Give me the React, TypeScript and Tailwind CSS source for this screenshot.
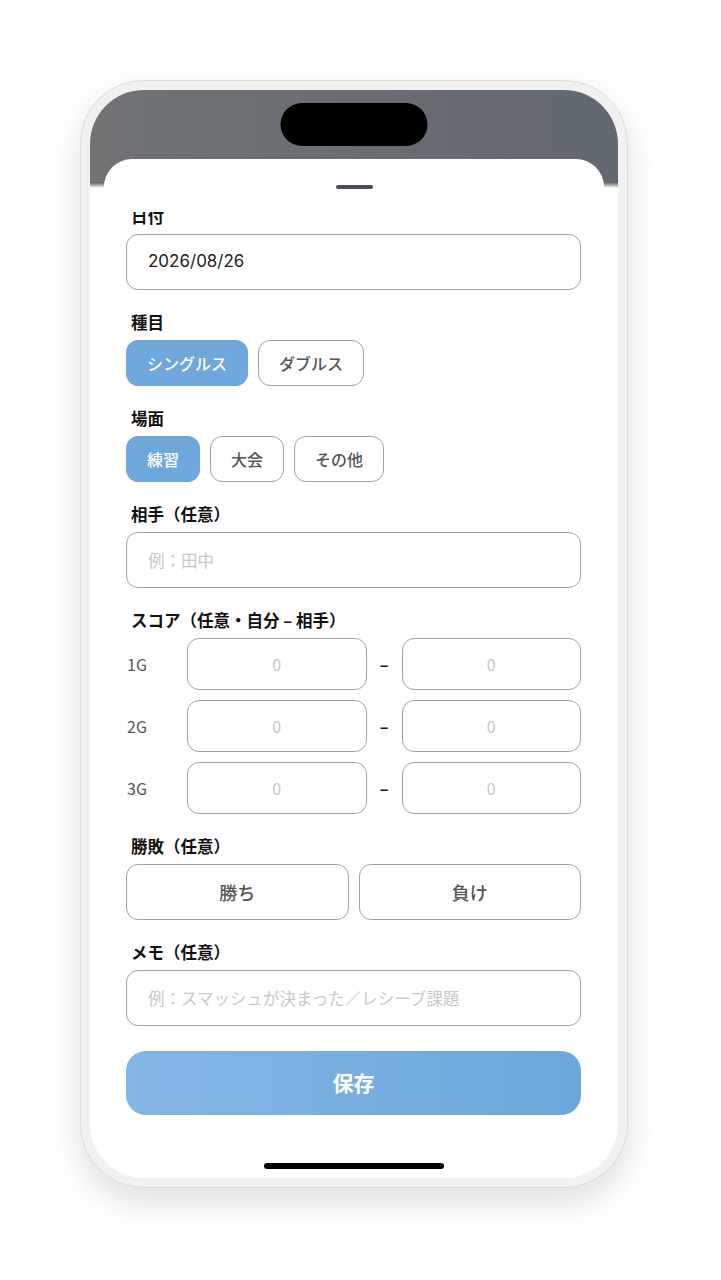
import { useState } from "react";

const jp = "font-['Noto_Sans_CJK_JP','Noto_Sans',sans-serif]";

function Label({ children }: { children: React.ReactNode }) {
  return (
    <div className="mb-2 pl-[5px] text-[16.5px] leading-[20px] font-bold text-[#111]">
      {children}
    </div>
  );
}

function Segment({
  items,
  value,
  onChange,
}: {
  items: string[];
  value: string;
  onChange: (v: string) => void;
}) {
  return (
    <div className="flex gap-[10px]">
      {items.map((it) => {
        const on = it === value;
        return (
          <button
            key={it}
            onClick={() => onChange(it)}
            className={
              on
                ? "h-[46px] rounded-[12px] border border-[#6ea7dc] bg-[#6ea7dc] px-5 text-[16px] font-medium text-white"
                : "h-[46px] rounded-[12px] border border-[#a3a3a3] bg-white px-5 text-[16px] font-medium text-[#555]"
            }
          >
            {it}
          </button>
        );
      })}
    </div>
  );
}

function ScoreRow({ game }: { game: string }) {
  return (
    <div className="grid grid-cols-[61px_1fr_35px_1fr] items-center">
      <span className="pl-[1px] text-[16px] text-[#555]">{game}</span>
      <input
        placeholder="0"
        className="h-[52px] w-full rounded-[12px] border border-[#a3a3a3] text-center text-[16px] outline-none placeholder:text-[#c8c8c8]"
      />
      <span className="text-center text-[16px] font-bold text-[#111]">–</span>
      <input
        placeholder="0"
        className="h-[52px] w-full rounded-[12px] border border-[#a3a3a3] text-center text-[16px] outline-none placeholder:text-[#c8c8c8]"
      />
    </div>
  );
}

export default function App() {
  const [kind, setKind] = useState("シングルス");
  const [scene, setScene] = useState("練習");

  return (
    <div className={`min-h-[1280px] w-full bg-white pl-[80px] pt-[80px] ${jp}`}>
      {/* phone */}
      <div className="h-[1108px] w-[548px] rounded-[64px] border border-[#dcdcdc] bg-[#f1f1f1] p-[9px] shadow-[0_14px_34px_rgba(0,0,0,0.13)]">
        <div className="relative h-full w-full overflow-hidden rounded-[54px] bg-white">
          {/* backdrop behind the sheet */}
          <div className="absolute inset-x-0 top-0 h-[98px] bg-gradient-to-r from-[#717375] to-[#626870]">
            <div className="absolute inset-x-0 bottom-0 h-[6px] bg-gradient-to-b from-[#5a5f66] to-white" />
          </div>
          <div className="absolute left-1/2 top-[13px] h-[43px] w-[147px] -translate-x-1/2 rounded-full bg-black" />

          {/* sheet */}
          <div className="absolute inset-x-[14px] bottom-0 top-[69px] flex flex-col rounded-t-[28px] bg-white">
            <div className="flex justify-center pt-[26px]">
              <div className="h-[4px] w-[37px] rounded-full bg-[#4a4f57]" />
            </div>

            <div className="mt-[23px] min-h-0 flex-1 overflow-hidden pl-[22px] pr-[23px]">
              <div className="-mt-[6px] flex flex-col gap-[22px]">
                <div>
                  <Label>日付</Label>
                  <div className="flex h-[56px] items-center rounded-[12px] border border-[#a3a3a3] px-[21px] font-['Inter',sans-serif] text-[17px] text-[#222]">
                    2026/08/26
                  </div>
                </div>

                <div>
                  <Label>種目</Label>
                  <Segment items={["シングルス", "ダブルス"]} value={kind} onChange={setKind} />
                </div>

                <div>
                  <Label>場面</Label>
                  <Segment items={["練習", "大会", "その他"]} value={scene} onChange={setScene} />
                </div>

                <div>
                  <Label>相手（任意）</Label>
                  <input
                    placeholder="例：田中"
                    className="h-[56px] w-full rounded-[12px] border border-[#a3a3a3] px-[21px] text-[16.5px] outline-none placeholder:text-[#c8c8c8]"
                  />
                </div>

                <div>
                  <Label>スコア（任意・自分 – 相手）</Label>
                  <div className="flex flex-col gap-[10px]">
                    <ScoreRow game="1G" />
                    <ScoreRow game="2G" />
                    <ScoreRow game="3G" />
                  </div>
                </div>

                <div>
                  <Label>勝敗（任意）</Label>
                  <div className="grid grid-cols-2 gap-[10px]">
                    <button className="h-[56px] rounded-[12px] border border-[#a3a3a3] text-[18px] font-medium text-[#555]">
                      勝ち
                    </button>
                    <button className="h-[56px] rounded-[12px] border border-[#a3a3a3] text-[18px] font-medium text-[#555]">
                      負け
                    </button>
                  </div>
                </div>

                <div>
                  <Label>メモ（任意）</Label>
                  <input
                    placeholder="例：スマッシュが決まった／レシーブ課題"
                    className="h-[56px] w-full rounded-[12px] border border-[#a3a3a3] px-[21px] text-[16.5px] outline-none placeholder:text-[#c8c8c8]"
                  />
                </div>

                <button className="mt-[3px] h-[64px] w-full rounded-[20px] bg-gradient-to-r from-[#84b6e4] to-[#6ca7db] text-[21px] font-bold text-white">
                  保存
                </button>
              </div>
            </div>
          </div>

          <div className="absolute bottom-[9px] left-1/2 h-[6px] w-[180px] -translate-x-1/2 rounded-full bg-black" />
        </div>
      </div>
    </div>
  );
}
